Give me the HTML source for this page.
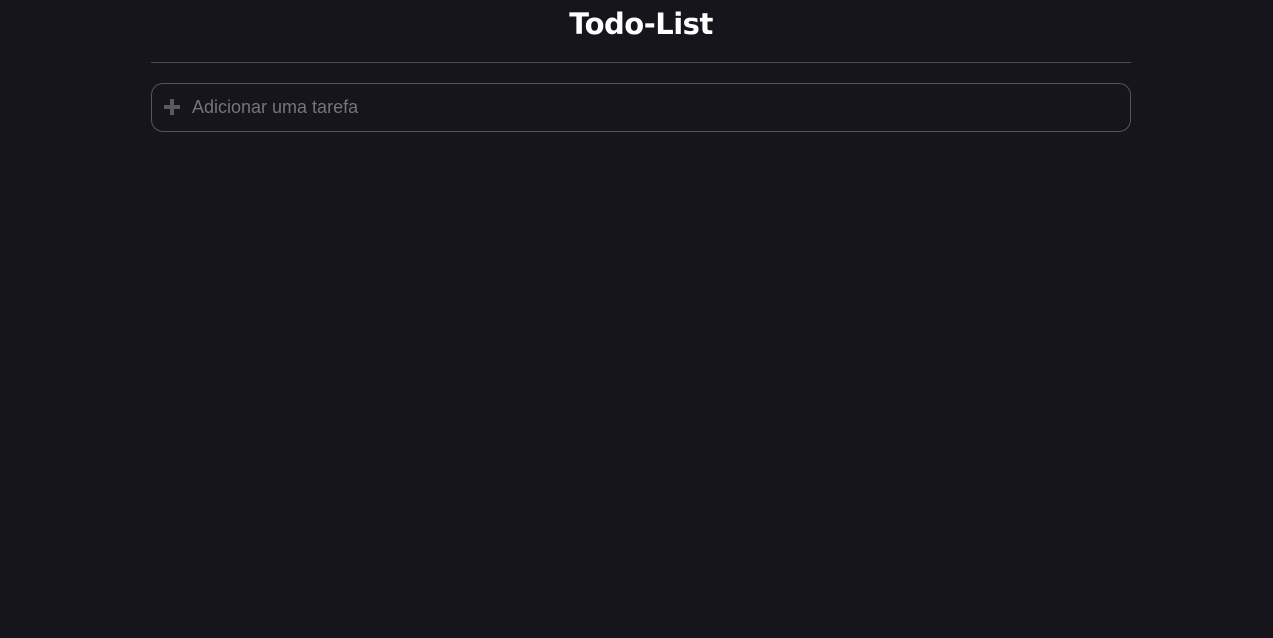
<!DOCTYPE html>
<html><head><meta charset="utf-8"><style>
html,body{margin:0;padding:0;background:#16151c;width:1273px;height:638px;overflow:hidden}
h1{position:absolute;left:0;width:1282px;top:4px;margin:0;text-align:center;color:#fff;font-family:"DejaVu Sans","Liberation Sans",sans-serif;font-weight:bold;font-size:29px;letter-spacing:-0.5px;line-height:40px}
.hr{position:absolute;left:151px;top:62px;width:980px;height:1px;background:#4a4950}
.box{position:absolute;left:151px;top:83px;width:978px;height:47px;border:1px solid #55545a;border-radius:12px}
.plus{position:absolute;left:12px;top:15px;width:16px;height:16px}
.plus:before{content:"";position:absolute;left:6px;top:0;width:4px;height:16px;background:#5a595f}
.plus:after{content:"";position:absolute;left:0;top:6px;width:16px;height:4px;background:#5a595f}
.ph{position:absolute;left:40px;top:13px;color:#75747a;font-family:"Liberation Sans",sans-serif;font-size:18px;line-height:21px}
</style></head><body>
<h1>Todo-List</h1>
<div class="hr"></div>
<div class="box"><div class="plus"></div><div class="ph">Adicionar uma tarefa</div></div>
</body></html>
